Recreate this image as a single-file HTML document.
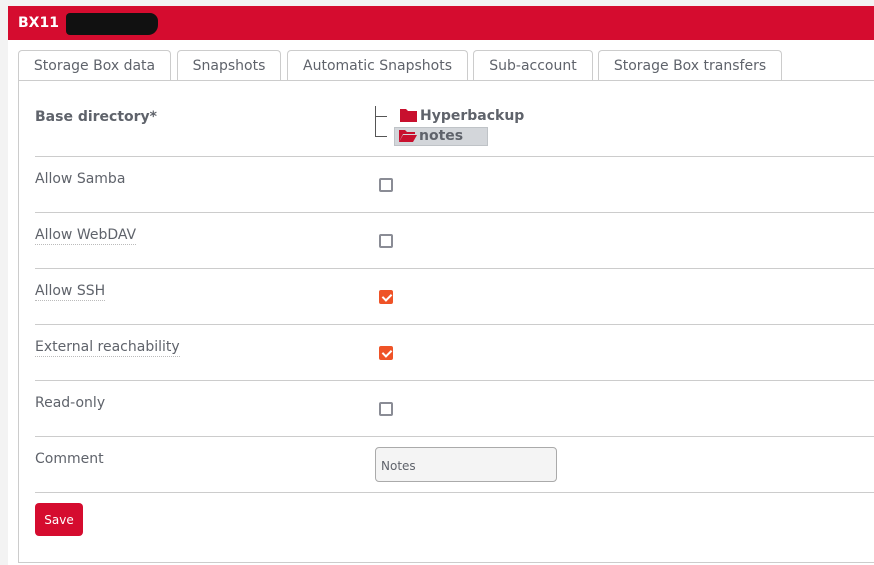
<!DOCTYPE html>
<html><head><meta charset="utf-8"><style>
*{box-sizing:border-box;margin:0;padding:0}
html,body{width:874px;height:565px;overflow:hidden}
body{background:#f3f3f3;font-family:"DejaVu Sans","Liberation Sans",sans-serif;color:#5f636b;position:relative}
.panel{position:absolute;left:8px;top:6px;width:870px;height:559px;background:#fff}
.hdr{position:absolute;left:8px;top:6px;width:870px;height:34px;background:#d50c2f;color:#fff;font-weight:bold;font-size:14px;padding:9px 0 0 10px}
.blk{position:absolute;left:66px;top:13px;width:92px;height:22px;background:#111;border-radius:4px 8px 10px 4px}
.tab{position:absolute;top:50px;height:31px;border:1px solid #ccc;border-bottom:none;border-radius:4px 4px 0 0;background:#fff;font-size:14px;text-align:center;line-height:31px;color:#5f636b}
.box{position:absolute;left:18px;top:80px;width:870px;height:483px;border:1px solid #ccc}
.line{position:absolute;left:35px;width:850px;height:1px;background:#ccc}
.lbl{position:absolute;left:35px;font-size:14px;border-bottom:1px dotted #bbb;line-height:17px}
.cb{position:absolute;left:379px;width:14px;height:14px;border:2px solid #8a8c95;border-radius:2px}
.cb.on{background:#ef5327;border-color:#ef5327}
.cb.on:after{content:"";position:absolute;left:3px;top:0px;width:4px;height:7px;border:solid #fff;border-width:0 2px 2px 0;transform:rotate(45deg)}
</style></head><body>
<div class="panel"></div>
<div class="hdr">BX11</div><div class="blk"></div>
<div class="tab" style="left:18px;width:153px">Storage Box data</div>
<div class="tab" style="left:177px;width:104px">Snapshots</div>
<div class="tab" style="left:287px;width:181px">Automatic Snapshots</div>
<div class="tab" style="left:473px;width:120px">Sub-account</div>
<div class="tab" style="left:598px;width:184px">Storage Box transfers</div>
<div class="box"></div>
<div class="lbl" style="top:109px;font-weight:bold;border:none">Base directory*</div>
<div style="position:absolute;left:375px;top:106px;width:1px;height:30px;background:#555"></div>
<div style="position:absolute;left:375px;top:116px;width:12px;height:1px;background:#555"></div>
<div style="position:absolute;left:375px;top:136px;width:12px;height:1px;background:#555"></div>
<svg style="position:absolute;left:400px;top:108px" width="18" height="14"><path d="M0 1h6l2 2h9v11H0z" fill="#c8102e"/></svg>
<div style="position:absolute;left:420px;top:108px;font-size:14px;font-weight:bold">Hyperbackup</div>
<div style="position:absolute;left:394px;top:127px;width:94px;height:19px;background:#d3d6da;border:1px solid #bfc3c7"></div>
<svg style="position:absolute;left:399px;top:129px" width="18" height="14"><path d="M0 1h6l2 2h8v2H4L0 13z" fill="#c8102e"/><path d="M4 6h14l-4 7H0z" fill="#c8102e"/></svg>
<div style="position:absolute;left:419px;top:128px;font-size:14px;font-weight:bold">notes</div>
<div class="line" style="top:156px"></div>
<div class="lbl" style="top:171px;border:none">Allow Samba</div><div class="cb" style="top:178px"></div>
<div class="line" style="top:212px"></div>
<div class="lbl" style="top:227px">Allow WebDAV</div><div class="cb" style="top:234px"></div>
<div class="line" style="top:268px"></div>
<div class="lbl" style="top:283px">Allow SSH</div><div class="cb on" style="top:290px"></div>
<div class="line" style="top:324px"></div>
<div class="lbl" style="top:339px">External reachability</div><div class="cb on" style="top:346px"></div>
<div class="line" style="top:380px"></div>
<div class="lbl" style="top:395px;border:none">Read-only</div><div class="cb" style="top:402px"></div>
<div class="line" style="top:436px"></div>
<div class="lbl" style="top:451px;border:none">Comment</div>
<div style="position:absolute;left:375px;top:447px;width:182px;height:35px;border:1px solid #aaa;border-radius:4px;background:#f4f4f4;font-size:12px;padding:11px 0 0 5px">Notes</div>
<div class="line" style="top:492px"></div>
<div style="position:absolute;left:35px;top:503px;width:48px;height:33px;background:#d50c2f;border-radius:4px;color:#fff;font-size:12px;text-align:center;line-height:35px">Save</div>
</body></html>
